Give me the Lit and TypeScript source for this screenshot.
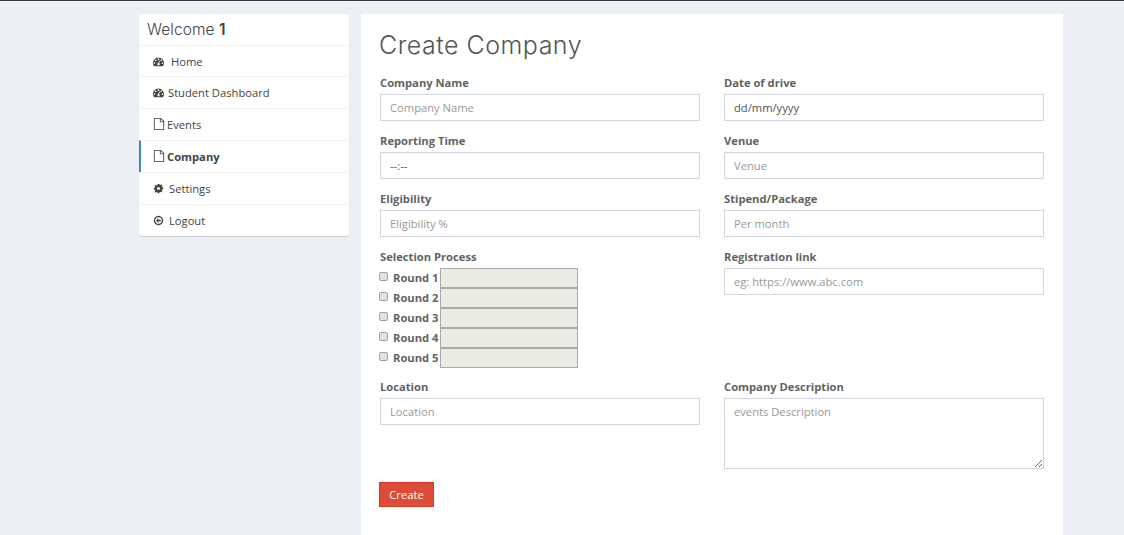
import { LitElement, html, css, svg } from 'lit';
import { customElement } from 'lit/decorators.js';

const icons = {
  dashboard: { box: '0 0 1792 1792', d: 'M384 1152q0-53-37.500-90.500T256 1024t-90.500 37.500T128 1152t37.500 90.500T256 1280t90.500-37.500T384 1152zm192-448q0-53-37.500-90.500T448 576t-90.500 37.500T320 704t37.500 90.500T448 832t90.500-37.500T576 704zm428 481l101-382q6-26-7.500-48.500T1059 725t-48 6.500-30 39.500l-101 382q-60 5-107 43.500t-63 98.500q-20 77 20 146t117 89 146-20 89-117q16-60-6-117t-72-91zm660-33q0-53-37.500-90.500T1536 1024t-90.500 37.500-37.500 90.500 37.500 90.500 90.500 37.500 90.500-37.500 37.500-90.500zm-640-640q0-53-37.500-90.500T896 384t-90.500 37.500T768 512t37.500 90.500T896 640t90.500-37.500T1024 512zm448 192q0-53-37.500-90.500T1344 576t-90.500 37.500T1216 704t37.500 90.500 90.500 37.500 90.500-37.500T1472 704zm320 448q0 261-141 483-19 29-54 29H195q-35 0-54-29Q0 1414 0 1152q0-182 71-348t191-286 286-191 348-71 348 71 286 191 191 286 71 348z' },
  file: { box: '0 0 1536 1792', d: 'M1468 380q28 28 48 76t20 88v1152q0 40-28 68t-68 28H96q-40 0-68-28t-28-68V96q0-40 28-68T96 0h896q40 0 88 20t76 48zM1024 136v376h376q-10-29-22-41l-313-313q-12-12-41-22zm384 1528V640H992q-40 0-68-28t-28-68V128H128v1536h1280z' },
  cog: { box: '0 0 1536 1792', d: 'M1024 896q0-106-75-181t-181-75-181 75-75 181 75 181 181 75 181-75 75-181zm512-109v222q0 12-8 23t-20 13l-185 28q-19 54-39 91 35 50 107 138 10 12 10 25t-9 23q-27 37-99 108t-94 71q-12 0-26-9l-138-108q-44 23-91 38-16 136-29 186-7 28-36 28H657q-14 0-24.500-8.500T621 1674l-28-184q-49-16-90-37l-141 107q-10 9-25 9-14 0-25-11-126-114-165-168-7-10-7-23 0-12 8-23 15-21 51-66.500t54-70.500q-27-50-41-99L29 1081q-13-2-21-12.500T0 1045V823q0-12 8-23t19-13l186-28q14-46 39-92-40-57-107-138-10-12-10-24 0-10 9-23 26-36 98.500-107.500T337 303q13 0 26 10l138 107q44-23 91-38 16-136 29-186 7-28 36-28h222q14 0 24.500 8.500T915 118l28 184q49 16 90 37l142-107q9-9 24-9 13 0 25 10 129 119 165 170 7 8 7 22 0 12-8 23-15 21-51 66.500t-54 70.500q26 50 41 98l183 28q13 2 21 12.500t8 23.500z' },
  logout: { box: '0 0 1792 1792', d: 'M1280 800v192q0 13-9.500 22.500T1248 1024H896v192q0 14-9 23t-23 9q-12 0-24-10L521 919q-9-9-9-23t9-23l320-320q9-9 23-9 13 0 22.500 9.500T896 576v192h352q13 0 22.500 9.500T1280 800zm160 96q0-148-73-273t-198-198-273-73-273 73-198 198-73 273 73 273 198 198 273 73 273-73 198-198 73-273zm224 0q0 209-103 385.500T1281.500 1561 896 1664t-385.500-103T231 1281.500 128 896t103-385.500T510.500 231 896 128t385.500 103T1561 510.500 1664 896z' },
};

type IconName = keyof typeof icons;

const menu: { label: string; icon: IconName; size: number; gap: number; active?: boolean }[] = [
  { label: 'Home', icon: 'dashboard', size: 11, gap: 7 },
  { label: 'Student Dashboard', icon: 'dashboard', size: 11, gap: 4 },
  { label: 'Events', icon: 'file', size: 12, gap: 2 },
  { label: 'Company', icon: 'file', size: 12, gap: 2, active: true },
  { label: 'Settings', icon: 'cog', size: 11, gap: 5 },
  { label: 'Logout', icon: 'logout', size: 11, gap: 5 },
];

function icon(name: IconName, size: number) {
  const i = icons[name];
  return html`<svg class="icon" width=${size} height=${size} viewBox=${i.box}>${svg`<path fill="currentColor" d=${i.d}></path>`}</svg>`;
}

@customElement('app-root')
export class AppRoot extends LitElement {
  static styles = css`
    :host {
      display: block;
      height: 535px;
      overflow: hidden;
      background: #ecf0f5;
      border-top: 1px solid #3a3a3a;
      box-sizing: border-box;
      font-family: 'Open Sans', sans-serif;
      font-size: 12px;
      color: #636363;
    }
    .page {
      display: grid;
      grid-template-columns: 210px 702px;
      gap: 12px;
      padding: 13px 0 0 139px;
      align-items: start;
    }
    .sidebar {
      background: #fff;
      border-radius: 3px;
      box-shadow: 0 1px 1px rgba(0, 0, 0, 0.15);
    }
    .welcome {
      height: 31px;
      box-sizing: border-box;
      padding: 6px 8px 0;
      font-family: Inter, sans-serif;
      font-size: 15.5px;
      font-weight: 300;
      line-height: 20px;
      letter-spacing: 0.05px;
      color: #444;
    }
    .welcome b {
      font-weight: 600;
    }
    .item {
      display: flex;
      align-items: center;
      height: 32px;
      box-sizing: border-box;
      padding: 0 0 1px 14px;
      border-top: 1px solid #f1f1f1;
      color: #444;
      font-size: 11.2px;
    }
    .welcome + .item {
      height: 31px;
      padding-bottom: 0;
    }
    .item.active {
      border-left: 2px solid #3c8dbc;
      padding-left: 12px;
      font-weight: 700;
    }
    .icon {
      flex: none;
    }
    .main {
      background: #fff;
      height: 530px;
      box-sizing: border-box;
      padding: 0 19px;
    }
    h1 {
      margin: 0 0 0 -1px;
      height: 61px;
      padding-top: 15px;
      box-sizing: border-box;
      font-family: Inter, sans-serif;
      font-size: 25px;
      font-weight: 300;
      line-height: 32px;
      letter-spacing: 0.5px;
      color: #555;
    }
    .form {
      display: grid;
      grid-template-columns: 320px 320px;
      column-gap: 24px;
      row-gap: 12px;
    }
    label.title {
      display: block;
      font-weight: 700;
      font-size: 11.2px;
      line-height: 16px;
      margin-bottom: 3px;
    }
    .input {
      display: block;
      width: 100%;
      height: 27px;
      box-sizing: border-box;
      border: 1px solid #d2d6e0;
      outline: none;
      padding: 0 9px;
      margin: 0;
      border-radius: 0;
      font-family: 'Open Sans', sans-serif;
      font-size: 11.2px;
      color: #555;
      background: #fff;
    }
    .input::placeholder {
      color: #999;
      opacity: 1;
    }
    textarea.input {
      height: 71px;
      padding: 5px 9px;
      resize: vertical;
    }
    .rounds {
      margin-bottom: -1px;
    }
    .round {
      display: flex;
      align-items: center;
      height: 20px;
    }
    .round input[type='checkbox'] {
      appearance: none;
      width: 9px;
      height: 9px;
      box-sizing: border-box;
      margin: 0 5px 3px -1px;
      flex: none;
      border: 1px solid #a0a0a0;
      border-radius: 2px;
      background: #e2e2e2;
    }
    .round label {
      width: 47px;
      flex: none;
      padding-bottom: 1px;
      font-weight: 700;
      font-size: 11.2px;
    }
    .round .box {
      width: 138px;
      height: 20px;
      box-sizing: border-box;
      background: #ebebe4;
      border: 1px solid #a9a9a9;
      padding: 0;
      margin: 0;
    }
    .create {
      display: block;
      margin: 13px 0 0 -1px;
      width: 55px;
      height: 25px;
      background: #dd4b39;
      border: 1px solid #d73925;
      color: #fff;
      font-family: 'Open Sans', sans-serif;
      font-size: 11.2px;
      padding: 0;
    }
  `;

  private field(name: string, placeholder: string, value = '') {
    return html`<div>
      <label class="title">${name}</label>
      <input class="input" type="text" placeholder=${placeholder} .value=${value} />
    </div>`;
  }

  render() {
    return html`
      <div class="page">
        <nav class="sidebar">
          <div class="welcome">Welcome <b>1</b></div>
          ${menu.map(
            (m) => html`<div class="item ${m.active ? 'active' : ''}">
              ${icon(m.icon, m.size)}<span style="margin-left:${m.gap}px">${m.label}</span>
            </div>`,
          )}
        </nav>
        <main class="main">
          <h1>Create Company</h1>
          <div class="form">
            ${this.field('Company Name', 'Company Name')}
            ${this.field('Date of drive', '', 'dd/mm/yyyy')}
            ${this.field('Reporting Time', '', '--:--')}
            ${this.field('Venue', 'Venue')}
            ${this.field('Eligibility', 'Eligibility %')}
            ${this.field('Stipend/Package', 'Per month')}
            <div class="rounds">
              <label class="title">Selection Process</label>
              ${[1, 2, 3, 4, 5].map(
                (n) => html`<div class="round">
                  <input type="checkbox" disabled />
                  <label>Round ${n}</label>
                  <input class="box" type="text" disabled />
                </div>`,
              )}
            </div>
            ${this.field('Registration link', 'eg: https://www.abc.com')}
            ${this.field('Location', 'Location')}
            <div>
              <label class="title">Company Description</label>
              <textarea class="input" placeholder="events Description"></textarea>
            </div>
          </div>
          <button class="create">Create</button>
        </main>
      </div>
    `;
  }
}
